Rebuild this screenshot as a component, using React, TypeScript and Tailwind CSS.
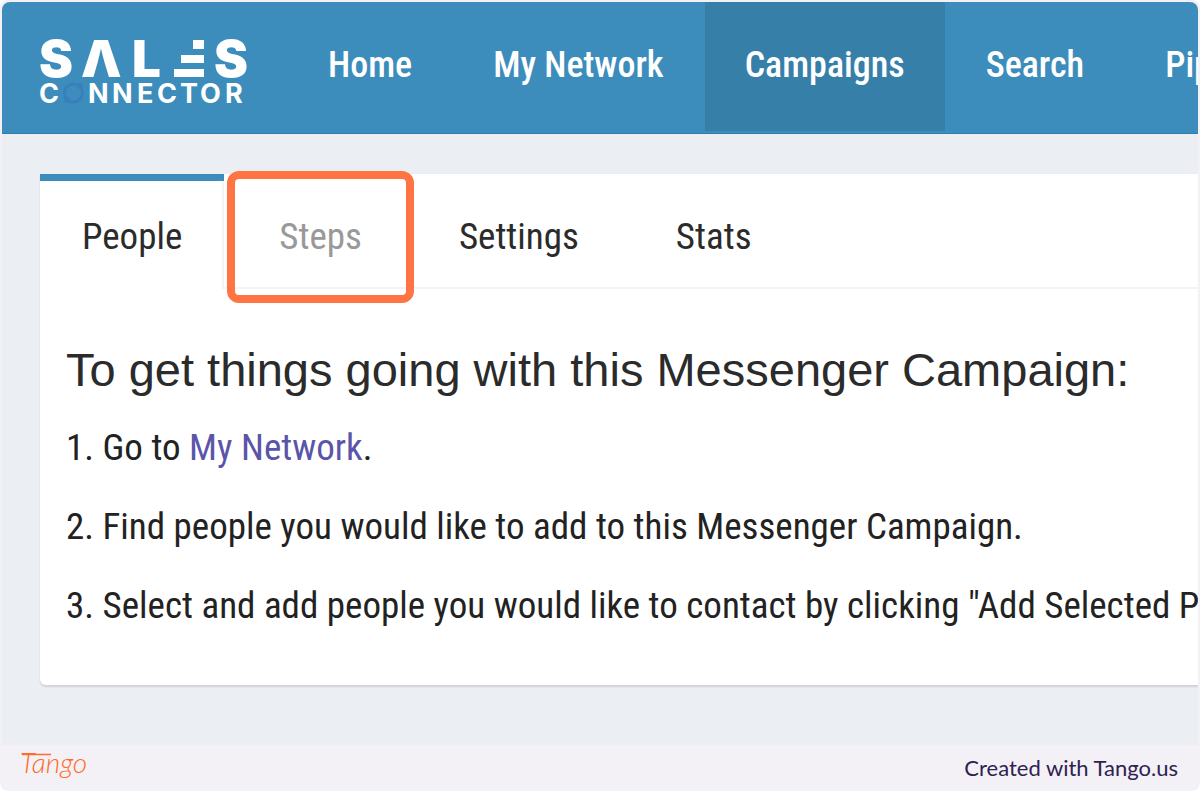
import clsx from 'clsx';

type NavItem = {
  label: string;
  active?: boolean;
};

type TabItem = {
  label: string;
  active?: boolean;
  highlighted?: boolean;
};

const navItems: NavItem[] = [
  { label: 'Home' },
  { label: 'My Network' },
  { label: 'Campaigns', active: true },
  { label: 'Search' },
  { label: 'Pipeline' },
];

const tabs: TabItem[] = [
  { label: 'People', active: true },
  { label: 'Steps', highlighted: true },
  { label: 'Settings' },
  { label: 'Stats' },
];

function SalesConnectorLogo() {
  return (
    <svg
      width="210"
      height="68"
      viewBox="0 0 210 68"
      fill="#fff"
      role="img"
      aria-label="Sales Connector"
      className="shrink-0 overflow-visible font-['Inter',sans-serif]"
    >
      <g fontSize="51" fontWeight="900">
        <text x="0" y="39">S</text>
        <text x="42" y="39">Λ</text>
        <text x="93" y="39">L</text>
        <text x="175" y="39">S</text>
      </g>
      <rect x="154" y="2" width="11" height="9" />
      <rect x="142" y="17" width="23" height="8" />
      <rect x="135" y="31" width="30" height="8" />
      <g fontSize="27" fontWeight="700">
        <text x="0" y="65">C</text>
        <text x="49" y="65">N</text>
        <text x="73" y="65">N</text>
        <text x="98" y="65">E</text>
        <text x="118" y="65">C</text>
        <text x="141" y="65">T</text>
        <text x="161" y="65">O</text>
        <text x="186" y="65">R</text>
      </g>
      {/* ring with two nodes */}
      <circle cx="34.5" cy="55" r="9" fill="none" stroke="#3a7fbd" strokeWidth="3" />
      <circle cx="41" cy="48" r="3" fill="#3a7fbd" />
      <circle cx="28" cy="62" r="3" fill="#3a7fbd" />
    </svg>
  );
}

function TangoLogo() {
  return (
    <svg
      width="70"
      height="32"
      viewBox="0 0 70 32"
      fill="#ff6b2c"
      role="img"
      aria-label="Tango"
      className="overflow-visible font-['Lato',sans-serif]"
    >
      <path d="M2 3.5H31" stroke="#ff6b2c" strokeWidth="1.5" />
      <text x="0" y="22" fontSize="28" fontStyle="italic" fontWeight="300">
        Tango
      </text>
    </svg>
  );
}

function Header() {
  return (
    <header className="flex overflow-hidden rounded-t-lg border-b border-[#2e7fb0] bg-[#3c8dbc] pb-[2px]">
      <a href="#" className="flex w-[286px] shrink-0 items-center pt-[11px] pl-[37px]">
        <SalesConnectorLogo />
      </a>
      <nav className="flex gap-px">
        {navItems.map((item) => (
          <a
            key={item.label}
            href="#"
            className={clsx(
              'px-10 pt-[43px] pb-[45px] text-[36px] leading-[41px] font-medium whitespace-nowrap text-white',
              item.active && 'bg-[#367fa9]',
            )}
          >
            {item.label}
          </a>
        ))}
      </nav>
    </header>
  );
}

function Tabs() {
  return (
    <div role="tablist" className="flex gap-[13px] border-b-2 border-[#f4f4f4]">
      {tabs.map((tab) => (
        <button
          key={tab.label}
          type="button"
          role="tab"
          aria-selected={!!tab.active}
          className={clsx(
            'relative -mb-[2px] border-t-[7px] px-[42px] pt-[35px] pb-8 text-[37px] leading-[41px]',
            tab.active
              ? 'border-t-[#3c8dbc] bg-white shadow-[inset_-2px_0_0_#f4f4f4]'
              : 'border-t-transparent',
            tab.highlighted ? 'text-[#999]' : 'text-[#2b2b2b]',
          )}
        >
          {tab.label}
          {tab.highlighted && (
            <span className="absolute -inset-x-[10px] -top-[10px] -bottom-[14px] rounded-xl border-8 border-[#ff7442]" />
          )}
        </button>
      ))}
    </div>
  );
}

function App() {
  return (
    <div className="bg-white font-['Roboto_Condensed','Liberation_Sans_Narrow',sans-serif]">
      <div className="overflow-hidden rounded-lg bg-[#f3f1f6]">
        <div className="px-[2px] pt-[2px]">
          <Header />
          <main className="overflow-hidden bg-[#ebeef3] pt-10 pb-[60px] pl-[38px]">
            <section className="rounded-bl-md bg-white shadow-[0_2px_2px_rgba(0,0,0,0.12)]">
              <Tabs />
              <div className="px-[26px] pt-[54px] pb-[53px] text-[37px] leading-[53px] whitespace-nowrap text-[#222]">
                <h1 className="mb-[25px] font-['Liberation_Sans',Arial,sans-serif] text-[47px] text-[#2b2b2b]">
                  To get things going with this Messenger Campaign:
                </h1>
                <p className="mb-[26px]">
                  1. Go to{' '}
                  <a href="#" className="text-[#5a55a8]">
                    My Network
                  </a>
                  .
                </p>
                <p className="mb-[26px]">
                  2. Find people you would like to add to this Messenger Campaign.
                </p>
                <p>
                  3. Select and add people you would like to contact by clicking
                  "Add Selected People to Campaign".
                </p>
              </div>
            </section>
          </main>
        </div>
        <footer className="flex h-[46px] items-center justify-between pr-[22px] pb-[2px] pl-5">
          <TangoLogo />
          <p className="font-['Lato',sans-serif] text-[22px] text-[#2f2150]">
            Created with Tango.us
          </p>
        </footer>
      </div>
    </div>
  );
}

export default App;
